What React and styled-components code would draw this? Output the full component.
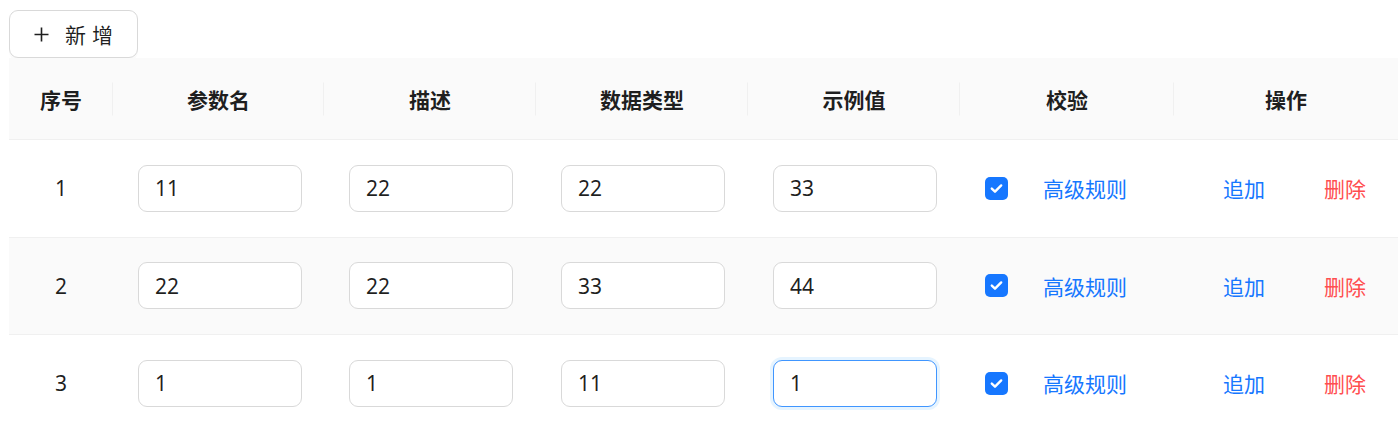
import React from "react";
import styled, { createGlobalStyle } from "styled-components";

const GlobalStyle = createGlobalStyle`
  body {
    margin: 0;
    background: #fff;
    font-family: "Noto Sans", "Noto Sans CJK SC", sans-serif;
    color: rgba(0, 0, 0, 0.88);
    overflow: hidden;
  }
`;

const Page = styled.div`
  padding: 10px 0 0 9px;
`;

const AddButton = styled.button`
  display: inline-flex;
  align-items: center;
  gap: 16px;
  height: 48px;
  padding: 0 18px 0 24px;
  border: 1px solid #d9d9d9;
  border-radius: 9px;
  background: #fff;
  font-family: inherit;
  font-size: 21px;
  color: rgba(0, 0, 0, 0.88);
  box-shadow: 0 3px 0 rgba(0, 0, 0, 0.02);
  cursor: pointer;
  span {
    letter-spacing: 6px;
  }
`;

const Table = styled.table`
  width: 1389px;
  border-collapse: collapse;
  table-layout: fixed;
  font-size: 21px;
`;

const HeadCell = styled.th`
  position: relative;
  height: 81px;
  padding: 0 24px;
  background: #fafafa;
  font-weight: 700;
  text-align: center;
  border-bottom: 1px solid #f0f0f0;
  &:not(:last-child)::after {
    content: "";
    position: absolute;
    right: 0;
    top: 50%;
    width: 1px;
    height: 33px;
    transform: translateY(-50%);
    background: #f0f0f0;
  }
`;

const Row = styled.tr`
  background: ${(p) => (p.$shade ? "#fafafa" : "#fff")};
`;

const Cell = styled.td`
  height: 96.5px;
  padding: ${(p) => (p.$align === "center" ? "0 24px" : "0 23px 0 25px")};
  border-bottom: 1px solid #f0f0f0;
  text-align: ${(p) => p.$align || "left"};
  vertical-align: middle;
`;

const Input = styled.input`
  box-sizing: border-box;
  width: 164px;
  height: 47px;
  padding: 0 16px;
  border: 1px solid ${(p) => (p.$active ? "#4096ff" : "#d9d9d9")};
  border-radius: 9px;
  background: #fff;
  font-family: inherit;
  font-size: 21px;
  color: rgba(0, 0, 0, 0.88);
  caret-color: #000;
  outline: none;
  box-shadow: ${(p) => (p.$active ? "0 0 0 3px rgba(5, 145, 255, 0.1)" : "none")};
`;

const Checks = styled.div`
  display: flex;
  align-items: center;
  white-space: nowrap;
`;

const Box = styled.span`
  flex-shrink: 0;
  display: inline-flex;
  align-items: center;
  justify-content: center;
  width: 23px;
  height: 23px;
  border-radius: 5px;
  background: #1677ff;
`;

const LinkButton = styled.button`
  padding: 0 0 0 ${(p) => p.$pad ?? 0}px;
  border: 0;
  background: transparent;
  font-family: inherit;
  font-size: 21px;
  white-space: nowrap;
  color: ${(p) => (p.$danger ? "#ff4d4f" : "#1677ff")};
  cursor: pointer;
`;

const Actions = styled.div`
  display: flex;
  align-items: center;
  gap: 59px;
  padding-left: 24px;
`;

const PlusIcon = () => (
  <svg width="15" height="15" viewBox="0 0 15 15">
    <path d="M7.5 0.5v14M0.5 7.5h14" stroke="rgba(0,0,0,0.88)" strokeWidth="1.6" fill="none" />
  </svg>
);

const CheckMark = () => (
  <svg width="15" height="15" viewBox="0 0 15 15">
    <path d="M2.8 7.6l3.2 3.1 6.2-6.3" stroke="#fff" strokeWidth="2.4" fill="none" strokeLinecap="round" strokeLinejoin="round" />
  </svg>
);

const columns = [
  { title: "序号", width: 104 },
  { title: "参数名", width: 211 },
  { title: "描述", width: 212 },
  { title: "数据类型", width: 212 },
  { title: "示例值", width: 212 },
  { title: "校验", width: 214 },
  { title: "操作", width: 224 },
];

const rows = [
  ["11", "22", "22", "33"],
  ["22", "22", "33", "44"],
  ["1", "1", "11", "1"],
];

export default function App() {
  return (
    <Page>
      <GlobalStyle />
      <AddButton>
        <PlusIcon />
        <span>新增</span>
      </AddButton>
      <Table>
        <colgroup>
          {columns.map((c) => (
            <col key={c.title} style={{ width: c.width }} />
          ))}
        </colgroup>
        <thead>
          <tr>
            {columns.map((c) => (
              <HeadCell key={c.title}>{c.title}</HeadCell>
            ))}
          </tr>
        </thead>
        <tbody>
          {rows.map((r, i) => (
            <Row key={i} $shade={i === 1}>
              <Cell $align="center">{i + 1}</Cell>
              {r.map((v, j) => {
                const active = i === 2 && j === 3;
                return (
                  <Cell key={j}>
                    <Input defaultValue={v} $active={active} autoFocus={active} />
                  </Cell>
                );
              })}
              <Cell>
                <Checks>
                  <Box>
                    <CheckMark />
                  </Box>
                  <LinkButton $pad={35}>高级规则</LinkButton>
                </Checks>
              </Cell>
              <Cell>
                <Actions>
                  <LinkButton>追加</LinkButton>
                  <LinkButton $danger>删除</LinkButton>
                </Actions>
              </Cell>
            </Row>
          ))}
        </tbody>
      </Table>
    </Page>
  );
}
